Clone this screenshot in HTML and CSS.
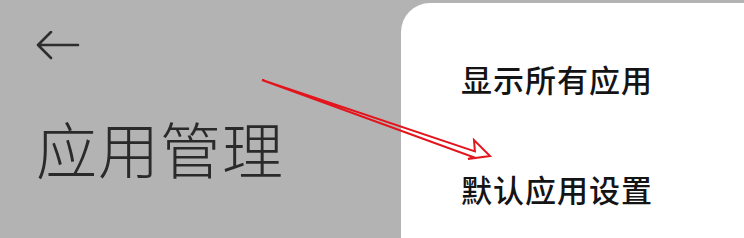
FILE: index.html
```html
<!DOCTYPE html>
<html lang="zh-CN">
<head>
<meta charset="UTF-8">
<meta name="viewport" content="width=device-width, initial-scale=1.0">
<title>应用管理</title>
<link rel="stylesheet" href="styles.css">
</head>
<body>
<div class="页面">
    <div class="左栏">
        <svg class="返回" width="44" height="30" viewBox="0 0 44 30">
            <path d="M2 14H42M15 1L2 14L15 27" fill="none" stroke="#2e2e2e" stroke-width="2.6" stroke-linecap="round" stroke-linejoin="round"/>
        </svg>
        <h1 class="标题">应用管理</h1>
    </div>
    <div class="菜单">
        <p class="菜单项">显示所有应用</p>
        <p class="菜单项">默认应用设置</p>
    </div>
</div>
<!-- 红色箭头标注 -->
<svg class="标注" width="744" height="238" viewBox="0 0 744 238">
    <polygon points="262,80 474.9,151.4 474,140 490,156 468,159 473.1,157.1" fill="none" stroke="#e3141c" stroke-width="2" stroke-linejoin="miter"/>
</svg>
</body>
</html>
```

FILE: styles.css
```css
*{margin:0;padding:0;box-sizing:border-box;}
html,body
{
    width: 744px;
    height: 238px;
    overflow: hidden;
}
body
{
    background: #b3b3b3;
    font-family: "Noto Sans CJK SC", "Noto Sans", sans-serif;
    position: relative;
}
.页面
{
    display: flex;
    height: 238px;
}
.左栏
{
    flex: 1;
    padding: 31px 0 0 36px;
}
.返回
{
    display: block;
}
.标题
{
    margin-top: 47px;
    font-size: 61px;
    font-weight: 300;
    line-height: 80px;
    color: #2a2a2a;
    letter-spacing: 1px;
}
.菜单
{
    flex: none;
    width: 343px;
    margin-top: 3px;
    background: #ffffff;
    border-top-left-radius: 29px;
    padding: 46px 0 0 60px;
}
.菜单项
{
    font-size: 31px;
    font-weight: 500;
    line-height: 60px;
    color: #141414;
    letter-spacing: 1px;
    margin-bottom: 50px;
}
.标注
{
    position: absolute;
    left: 0;
    top: 0;
}
```
